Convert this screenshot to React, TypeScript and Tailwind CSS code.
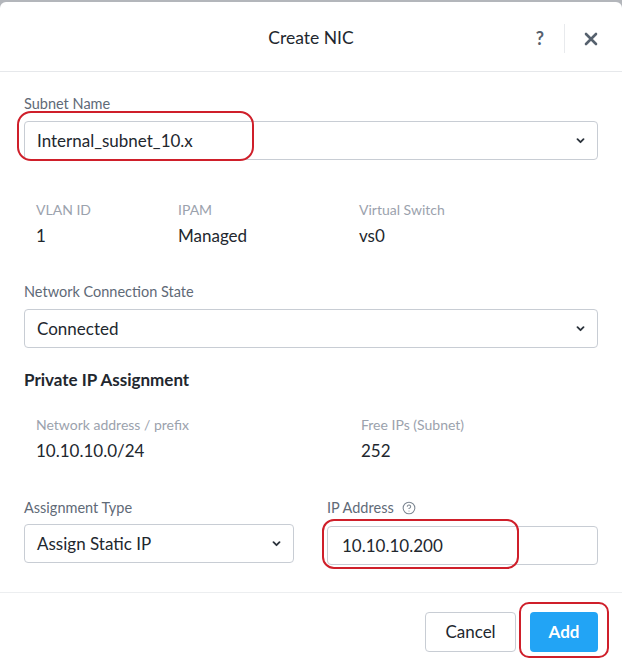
import React from "react";

const Chevron = () => (
  <svg width="9" height="6" viewBox="0 0 9 6">
    <path d="M1.5 1.2 L4.5 4.2 L7.5 1.2" stroke="#2b323b" strokeWidth="1.8" fill="none" strokeLinecap="round" strokeLinejoin="round" />
  </svg>
);

const Select = ({ value, className = "" }: { value: string; className?: string }) => (
  <div className={`flex h-[39px] items-center justify-between rounded-[4px] border border-[#c8cdd4] bg-white pl-[12px] pr-[12px] ${className}`}>
    <span className="text-[17px] text-[#22272e]">{value}</span>
    <Chevron />
  </div>
);

const Stat = ({ label, value }: { label: string; value: string }) => (
  <div className="flex flex-col">
    <span className="h-[18px] text-[14px] leading-[18px] text-[#9ba2ad]">{label}</span>
    <span className="mt-[7px] h-[20px] text-[17px] leading-[20px] text-[#22272e]">{value}</span>
  </div>
);

export default function App() {
  return (
    <div className="h-[666px] w-[622px] bg-[#b3b6bb] pt-[2px] font-['Lato',sans-serif]">
      <div className="relative flex h-[664px] flex-col rounded-t-[6px] bg-white">
        {/* header */}
        <div className="grid h-[70px] grid-cols-[1fr_auto_1fr] items-center border-b border-[#e6e8eb]">
          <div />
          <h1 className="pt-[3px] text-[17.5px] text-[#22272e]">Create NIC</h1>
          <div className="flex items-center justify-end pr-[24px] pt-[4px]">
            <span className="w-[10px] text-center text-[18px] font-bold text-[#56616e]">?</span>
            <div className="mx-[19px] h-[29px] w-px bg-[#e8eaed]" />
            <svg width="14" height="14" viewBox="0 0 14 14">
              <path d="M2 2 L12 12 M12 2 L2 12" stroke="#56616e" strokeWidth="2.6" strokeLinecap="round" />
            </svg>
          </div>
        </div>

        {/* body */}
        <div className="flex flex-col px-[24px]">
          <label className="mt-[23px] h-[18px] text-[14.5px] leading-[18px] text-[#5f6a77]">Subnet Name</label>
          <Select value="Internal_subnet_10.x" className="mt-[8px]" />

          <div className="mt-[41px] grid grid-cols-[142px_181px_1fr] pl-[12px]">
            <Stat label="VLAN ID" value="1" />
            <Stat label="IPAM" value="Managed" />
            <Stat label="Virtual Switch" value="vs0" />
          </div>

          <label className="mt-[37px] h-[18px] text-[14.5px] leading-[18px] text-[#5f6a77]">Network Connection State</label>
          <Select value="Connected" className="mt-[8px]" />

          <h2 className="mt-[22px] h-[20px] text-[17px] font-bold leading-[20px] text-[#22272e]">Private IP Assignment</h2>

          <div className="mt-[26px] grid grid-cols-[325px_1fr] pl-[12px]">
            <Stat label="Network address / prefix" value="10.10.10.0/24" />
            <Stat label="Free IPs (Subnet)" value="252" />
          </div>

          <div className="mt-[38px] grid grid-cols-[270px_1fr] gap-x-[33px]">
            <div className="flex flex-col">
              <label className="h-[18px] text-[14.5px] leading-[18px] text-[#5f6a77]">Assignment Type</label>
              <Select value="Assign Static IP" className="mt-[7px]" />
            </div>
            <div className="flex flex-col">
              <label className="flex h-[18px] items-center gap-[8px] text-[14.5px] leading-[18px] text-[#5f6a77]">
                IP Address
                <svg width="14" height="14" viewBox="0 0 24 24" fill="none" stroke="#7d8792" strokeWidth="1.8" strokeLinecap="round" strokeLinejoin="round">
                  <circle cx="12" cy="12" r="10" />
                  <path d="M9.09 9a3 3 0 0 1 5.83 1c0 2-3 3-3 3" />
                  <path d="M12 17h.01" />
                </svg>
              </label>
              <div className="mt-[9px] flex h-[39px] items-center rounded-[4px] border border-[#c8cdd4] pl-[14px] text-[17px] text-[#22272e]">
                10.10.10.200
              </div>
            </div>
          </div>
        </div>

        {/* footer */}
        <div className="mt-auto flex h-[74px] items-start justify-end gap-[14px] border-t border-[#eceef0] pr-[24px] pt-[19px]">
          <button className="h-[40px] w-[91px] rounded-[4px] border border-[#c8cdd4] bg-white text-[17px] text-[#22272e]">Cancel</button>
          <button className="h-[40px] w-[68px] rounded-[4px] bg-[#22a4f5] text-[17px] font-bold text-white">Add</button>
        </div>

        {/* red annotations */}
        <div className="pointer-events-none absolute left-[17px] top-[109px] h-[50px] w-[237px] rounded-[14px] border-[2.5px] border-[#cf1f2a]" />
        <div className="pointer-events-none absolute left-[322px] top-[517px] h-[50px] w-[197px] rounded-[12px] border-[2.5px] border-[#cf1f2a]" />
        <div className="pointer-events-none absolute left-[519px] top-[600px] h-[56px] w-[90px] rounded-[10px] border-[2.5px] border-[#cf1f2a]" />
      </div>
    </div>
  );
}
